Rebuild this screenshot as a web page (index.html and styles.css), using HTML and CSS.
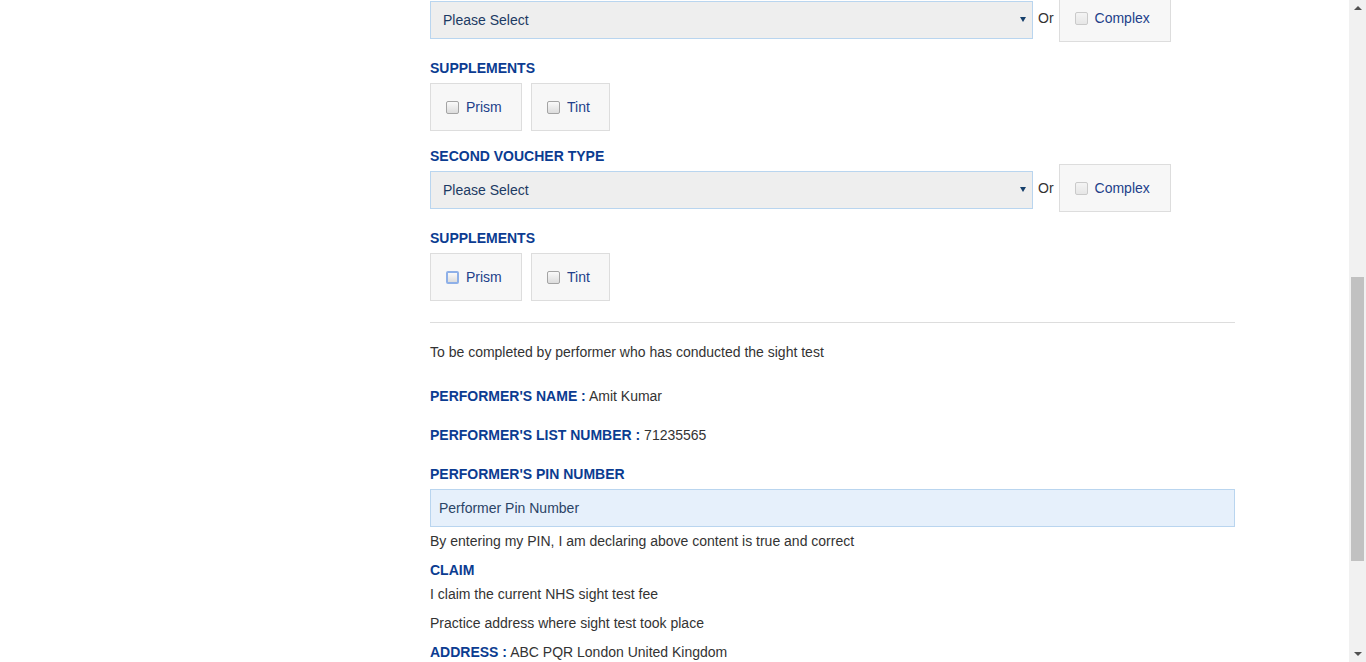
FILE: index.html
```html
<!DOCTYPE html>
<html lang="en">
<head>
<meta charset="utf-8">
<title>Sight Test Claim</title>
<link rel="stylesheet" href="styles.css">
</head>
<body>
<div class="page">
  <div class="sidebar"></div>
  <main class="main">
    <div class="voucher-row first">
      <div class="select-wrap">
        <select class="select"><option>Please Select</option></select>
      </div>
      <span class="or">Or</span>
      <label class="check-box complex"><input type="checkbox" class="cb cb-disabled"><span>Complex</span></label>
    </div>

    <div class="label sup">SUPPLEMENTS</div>
    <div class="checks">
      <label class="check-box"><input type="checkbox" class="cb"><span>Prism</span></label>
      <label class="check-box"><input type="checkbox" class="cb"><span>Tint</span></label>
    </div>

    <div class="label sup">SECOND VOUCHER TYPE</div>
    <div class="voucher-row second">
      <div class="select-wrap">
        <select class="select"><option>Please Select</option></select>
      </div>
      <span class="or">Or</span>
      <label class="check-box complex"><input type="checkbox" class="cb cb-disabled"><span>Complex</span></label>
    </div>

    <div class="label sup">SUPPLEMENTS</div>
    <div class="checks">
      <label class="check-box"><input type="checkbox" class="cb cb-focus"><span>Prism</span></label>
      <label class="check-box"><input type="checkbox" class="cb"><span>Tint</span></label>
    </div>

    <hr class="divider">

    <p class="text intro">To be completed by performer who has conducted the sight test</p>

    <p class="text field name"><span class="label">PERFORMER'S NAME :</span> Amit Kumar</p>
    <p class="text field list"><span class="label">PERFORMER'S LIST NUMBER :</span> 71235565</p>
    <p class="text field pin"><span class="label">PERFORMER'S PIN NUMBER</span></p>
    <input class="pin-input" type="text" placeholder="Performer Pin Number">
    <p class="text declare">By entering my PIN, I am declaring above content is true and correct</p>
    <p class="text claim"><span class="label">CLAIM</span></p>
    <p class="text claim-fee">I claim the current NHS sight test fee</p>
    <p class="text practice">Practice address where sight test took place</p>
    <p class="text address"><span class="label">ADDRESS :</span> ABC PQR London United Kingdom</p>
  </main>
</div>

<div class="scrollbar">
  <div class="arrow-up"></div>
  <div class="track"><div class="thumb"></div></div>
  <div class="arrow-down"></div>
</div>
</body>
</html>
```

FILE: styles.css
```css
html, body {
  margin: 0;
  padding: 0;
  height: 662px;
  overflow: hidden;
  background: #ffffff;
}

body {
  font-family: "Liberation Sans", Arial, sans-serif;
  font-size: 14px;
  color: #333333;
}

.page {
  display: flex;
}

.sidebar {
  width: 430px;
  flex: none;
}

.main {
  width: 805px;
  flex: none;
}

.voucher-row {
  display: flex;
  align-items: flex-start;
  height: 49px;
}

.voucher-row.first {
  margin-top: -6px;
}

.select-wrap {
  position: relative;
  width: 603px;
  margin-top: 7px;
}

.select-wrap::after {
  content: "";
  position: absolute;
  right: 7px;
  top: 16px;
  border-left: 3px solid transparent;
  border-right: 3px solid transparent;
  border-top: 5px solid #163f6b;
}

.select {
  -webkit-appearance: none;
  appearance: none;
  display: block;
  width: 603px;
  height: 38px;
  margin: 0;
  padding: 0 12px;
  border: 1px solid #b9d5ef;
  border-radius: 0;
  background: #eeeeee;
  font-family: "Liberation Sans", Arial, sans-serif;
  font-size: 14px;
  color: #1c3a63;
}

.or {
  margin: 16px 5px 0 5px;
  line-height: 16px;
  color: #333333;
}

.check-box {
  display: flex;
  align-items: center;
  box-sizing: border-box;
  height: 48px;
  padding: 0 15px;
  border: 1px solid #dddddd;
  background: #f7f7f7;
  color: #223f8a;
  line-height: 16px;
}

.check-box.complex {
  width: 112px;
}

.checks {
  display: flex;
  gap: 9px;
  margin-top: 7px;
}

.checks .check-box:first-child {
  width: 92px;
}

.checks .check-box:last-child {
  width: 79px;
}

.cb {
  -webkit-appearance: none;
  appearance: none;
  box-sizing: border-box;
  width: 13px;
  height: 13px;
  margin: 0 7px 0 0;
  border: 1px solid #a4a4a4;
  border-radius: 2px;
  background: linear-gradient(#fafafa, #dcdcdc);
  flex: none;
}

.cb-disabled {
  border-color: #cacaca;
  background: linear-gradient(#f4f4f4, #e6e6e6);
}

.cb-focus {
  border: 2px solid #8eb0e8;
  background: linear-gradient(#fafafa, #dcdcdc);
}

.label {
  font-weight: bold;
  color: #0b3c91;
}

.label.sup {
  line-height: 16px;
  margin-top: 17px;
}

.divider {
  border: 0;
  border-top: 1px solid #dddddd;
  height: 0;
  margin: 21px 0 0 0;
}

.text {
  margin: 0;
  line-height: 20px;
}

.intro {
  margin-top: 19px;
}

.name {
  margin-top: 24px;
}

.list {
  margin-top: 19px;
}

.pin {
  margin-top: 19px;
}

.pin-input {
  display: block;
  box-sizing: border-box;
  width: 805px;
  height: 38px;
  margin: 5px 0 0 0;
  padding: 0 8px;
  border: 1px solid #b9d5ef;
  border-radius: 0;
  background: #e6f0fb;
  font-family: "Liberation Sans", Arial, sans-serif;
  font-size: 14px;
  color: #2b4466;
  outline: none;
}

.pin-input::placeholder {
  color: #2b4466;
  opacity: 1;
}

.declare {
  margin-top: 4px;
}

.claim {
  margin-top: 9px;
}

.claim-fee {
  margin-top: 4px;
}

.practice {
  margin-top: 9px;
}

.address {
  margin-top: 9px;
}

.scrollbar {
  position: fixed;
  top: 0;
  right: 0;
  width: 17px;
  height: 662px;
  background: #f1f1f1;
  display: flex;
  flex-direction: column;
  align-items: center;
}

.arrow-up {
  margin-top: 6px;
  width: 0;
  height: 0;
  border-left: 4px solid transparent;
  border-right: 4px solid transparent;
  border-bottom: 4px solid #505050;
}

.track {
  flex: 1;
  width: 100%;
  position: relative;
}

.thumb {
  position: absolute;
  left: 2px;
  right: 2px;
  top: 267px;
  height: 284px;
  background: #c1c1c1;
}

.arrow-down {
  margin-bottom: 6px;
  width: 0;
  height: 0;
  border-left: 4px solid transparent;
  border-right: 4px solid transparent;
  border-top: 4px solid #505050;
}
```
